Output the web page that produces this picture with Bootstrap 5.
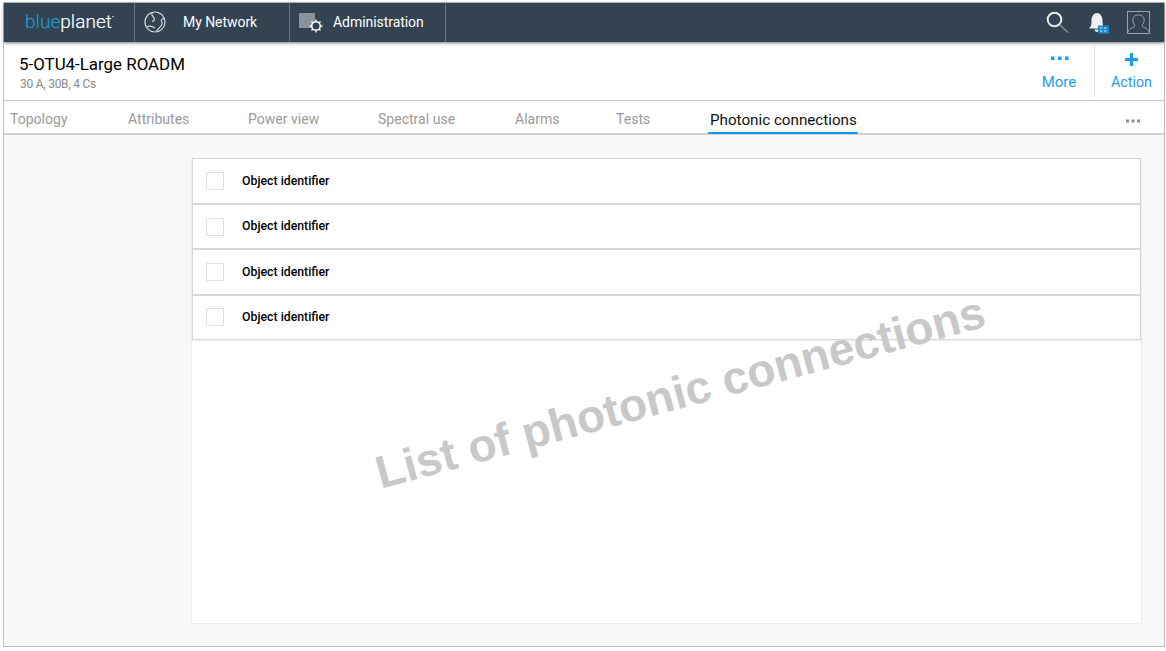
<!DOCTYPE html>
<html lang="en">
<head>
<meta charset="utf-8">
<title>Photonic connections</title>
<link href="https://cdn.jsdelivr.net/npm/bootstrap@5.3.0/dist/css/bootstrap.min.css" rel="stylesheet">
<style>
html,body{height:100%;background:#fff;overflow:hidden}
body{font-family:Roboto,"Liberation Sans",sans-serif;padding:2px 1px 4px 3px;}
.frame{height:645px;width:1162px;background:#f8f8f8;border-right:1px solid #bbb;border-bottom:1px solid #bbb;border-left:1px solid #c4c4c4;border-top:1px solid #c4c4c4}
.topbar{height:38.500px;background:#334351;box-shadow:0 1px 3px rgba(0,0,0,.55);color:#fff;position:relative;z-index:2}
.brand{width:130px;padding-left:21px;font-size:19px;font-weight:300;letter-spacing:.05px;line-height:38px;-webkit-text-stroke:.2px #fff}
.brand .bl{color:#1f9ad6;-webkit-text-stroke:.2px #1f9ad6}
.brand sup{font-size:6px;top:-9px}
.topitem{height:38.500px;border-left:1px solid #6a7782;font-size:14px;letter-spacing:-.05px}
.ti-net{width:155px;padding-left:8px;gap:16px}
.ti-adm{width:157px;padding-left:9px;gap:9px;border-right:1px solid #6a7782}
.ic-search{margin-right:19px}
.ic-user{margin-left:16px;margin-right:14px}
.head{height:59.500px;background:#fff;border-bottom:1px solid #c8c8c8}
.titlewrap{padding:13.500px 0 0 15px}
.head h1{font-size:16.900px;font-weight:400;color:#000;margin:0;line-height:19px}
.head .sub{font-size:12px;color:#8b8b8b;line-height:14px;margin:3px 0 0 1px;letter-spacing:-.25px}
.tools{padding-top:3.500px;margin-right:-1px}
.tool{color:#1e9bf0;font-size:15px;line-height:18px;text-align:center}
.tool-more{width:70px;height:52px}
.tool-act{width:71px;height:52px;border-left:1px solid #e4e4e4;font-size:14.300px}
.tool-act .lbl{margin-left:3px}
.glyphbox{height:23px;margin:1px 0 4px;padding-left:2px;display:flex;align-items:center;justify-content:center}
.plusicon{margin-top:3px}
.tabsbar{height:34px;background:#fff;border-bottom:2px solid #d2d2d2;padding-left:6px;position:relative}
.tabx{font-size:14.050px;color:#9a9a9a;line-height:36px;height:32px;position:relative}
.tabx.on{color:#111;font-size:15.200px;line-height:38px}
.tabx.on::after{content:"";position:absolute;left:-2px;right:-1px;bottom:-1px;height:2.500px;background:#0f96ee;border-radius:1px}
.t1{width:118px}.t2{width:120px}.t3{width:130px}.t4{width:137px}.t5{width:101px}.t6{width:94px}
.tabdots{margin:8px 24px 0 auto}
.panel{width:950px;height:466px;margin:23px 0 0 188px;padding-top:.45px;background:#fff;border-bottom:1px solid #ececec;border-right:1px solid #ececec;box-shadow:-1px 0 0 #efefef;position:relative}
.rowx{height:45.400px;background:#fff;border:1px solid #d8d8d8;padding-left:13px;gap:18px;box-shadow:0 1px 1px #eee}
.box{width:18px;height:18px;border:1px solid #dedede;border-radius:1px;background:#fff}
.rowx span{font-size:12.300px;font-weight:500;color:#000}
.wm{position:absolute;left:174px;top:204px;font-family:"Liberation Sans",Arial,sans-serif;font-weight:700;font-size:46px;line-height:60px;color:#c8c8c8;white-space:nowrap;transform:rotate(-15deg);transform-origin:center}
</style>
</head>
<body>
<div class="frame d-flex flex-column">
  <nav class="topbar d-flex align-items-center">
    <div class="brand"><span class="bl">blue</span>planet<sup>•</sup></div>
    <div class="topitem ti-net d-flex align-items-center">
      <svg width="24" height="24" viewBox="0 0 24 24" fill="none" stroke="#d5d9dc" stroke-width="1.200"><circle cx="12" cy="12" r="10"/><path d="M9 2.500c-1 3 1 4 2 5.500s0 3-2 3.500M21 8c-3 1-3 3-2 5s-4 6-6 8.500M4 17c3-2 5-1 8 1"/></svg>
      <span>My Network</span>
    </div>
    <div class="topitem ti-adm d-flex align-items-center">
      <svg width="25" height="22" viewBox="0 0 25 22"><rect x="0" y="2" width="16" height="15" fill="#8a939b"/><circle cx="17" cy="15" r="4.300" fill="#334351" stroke="#fff" stroke-width="1.600"/><path d="M17 8.600v2M17 19.400v2M10.600 15h2M21.400 15h2M12.500 10.500l1.400 1.400M20.100 18.100l1.400 1.400M21.500 10.500l-1.400 1.400M13.900 18.100l-1.400 1.400" stroke="#fff" stroke-width="1.300"/></svg>
      <span>Administration</span>
    </div>
    <div class="ms-auto d-flex align-items-center">
      <svg class="ic-search" width="23" height="23" viewBox="0 0 23 23" fill="none"><circle cx="8.500" cy="8.500" r="6.800" stroke="#e8e8e8" stroke-width="2"/><path d="M14 14l8 7.500" stroke="#8c959c" stroke-width="1.300"/></svg>
      <svg width="23" height="24" viewBox="0 0 23 24"><path d="M1 18.500c2.500-2 2.500-5 2.500-8 0-4 2.500-7.500 5.500-7.500s5.500 3.500 5.500 7.500c0 3 0 6 2.500 8z" fill="#f0f0f0"/><path d="M6.500 19.500h5a2.500 2.500 0 0 1-5 0z" fill="#f0f0f0"/><rect x="10" y="15.500" width="11" height="8" fill="#1c87c9"/><path d="M12 18h2.500M12 21h2.500M16 18h2.500M16 21h2.500" stroke="#cfe6f5" stroke-width="1.200"/></svg>
      <svg class="ic-user" width="23" height="23" viewBox="0 0 23 23" fill="none" stroke="#9aa3aa" stroke-width="1"><rect x=".5" y=".5" width="22" height="22"/><path d="M1 21c1-4 4-4 6-5 1-1 1-2 0-3-2-3-2-9 4.500-9s6.500 6 4.500 9c-1 1-1 2 0 3 2 1 5 1 6 5"/></svg>
    </div>
  </nav>
  <header class="head d-flex">
    <div class="titlewrap">
      <h1>5-OTU4-Large ROADM</h1>
      <div class="sub">30 A, 30B, 4 Cs</div>
    </div>
    <div class="ms-auto d-flex tools">
      <div class="tool tool-more"><div class="glyphbox"><svg width="18" height="4" viewBox="0 0 18 4" fill="#1e9bf0"><rect x="0" y=".500" width="3.500" height="3.500"/><rect x="7" y=".500" width="3.500" height="3.500"/><rect x="14" y=".500" width="3.500" height="3.500"/></svg></div>More</div>
      <div class="tool tool-act"><div class="glyphbox"><svg class="plusicon" width="13" height="13" viewBox="0 0 13 13" fill="#1e9bf0"><path d="M5 0h3v5h5v3H8v5H5V8H0V5h5z"/></svg></div><span class="lbl">Action</span></div>
    </div>
  </header>
  <div class="tabsbar d-flex">
    <div class="tabx t1">Topology</div>
    <div class="tabx t2">Attributes</div>
    <div class="tabx t3">Power view</div>
    <div class="tabx t4">Spectral use</div>
    <div class="tabx t5">Alarms</div>
    <div class="tabx t6">Tests</div>
    <div class="tabx on">Photonic connections</div>
    <div class="tabdots d-flex align-items-center"><svg width="14" height="4" viewBox="0 0 14 4" fill="#8a8a8a"><rect y=".500" width="3" height="3"/><rect x="5.500" y=".500" width="3" height="3"/><rect x="11" y=".500" width="3" height="3"/></svg></div>
  </div>
  <main class="panel">
    <div class="rowx d-flex align-items-center"><div class="box"></div><span>Object identifier</span></div>
    <div class="rowx d-flex align-items-center"><div class="box"></div><span>Object identifier</span></div>
    <div class="rowx d-flex align-items-center"><div class="box"></div><span>Object identifier</span></div>
    <div class="rowx d-flex align-items-center"><div class="box"></div><span>Object identifier</span></div>
    <div class="wm">List of photonic connections</div>
  </main>
</div>
</body>
</html>
